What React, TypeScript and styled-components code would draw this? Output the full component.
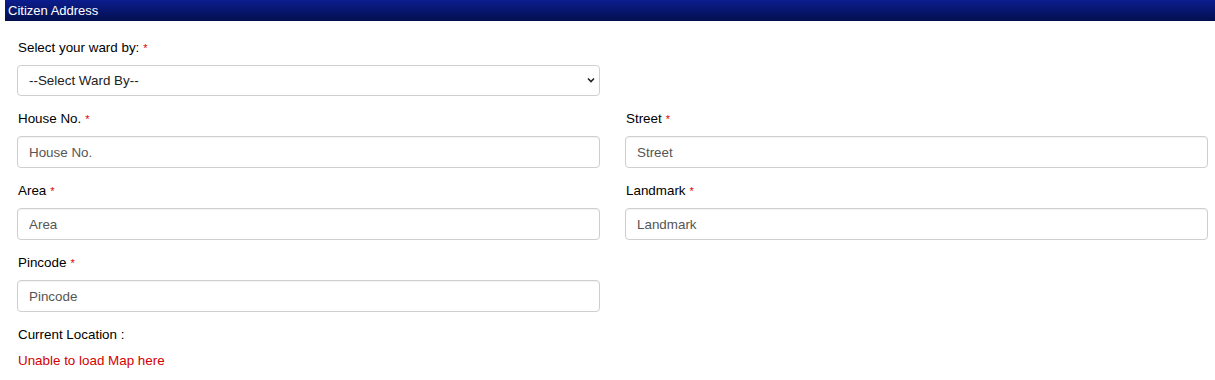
import React from "react";
import styled, { createGlobalStyle } from "styled-components";

const GlobalStyle = createGlobalStyle`
    body {
        margin: 0;
        background: #fff;
        font-family: "Liberation Sans", Arial, sans-serif;
        font-size: 13px;
        color: #000;
    }
`;

const Panel = styled.div`
    padding-left: 5px;
    width: 1210px;
`;

const Header = styled.div`
    height: 21px;
    line-height: 21px;
    padding-left: 3px;
    color: #fff;
    font-size: 13px;
    background: linear-gradient(#0c1d8f, #020f4e);
`;

const Form = styled.div`
    padding: 18px 7px 0 12px;
    display: grid;
    grid-template-columns: 583px 583px;
    column-gap: 25px;
    row-gap: 14px;
`;

const Group = styled.div`
    display: flex;
    flex-direction: column;
`;

const Label = styled.label`
    height: 18px;
    line-height: 18px;
    margin-bottom: 8px;
    padding-left: 1px;
    font-size: 13.4px;
`;

const Star = styled.span`
    color: #d00;
    font-size: 11px;
    margin-left: 4px;
    vertical-align: top;
`;

const Field = styled.input`
    box-sizing: border-box;
    height: 32px;
    width: 100%;
    padding: 0 11px;
    border: 1px solid #cfcfcf;
    border-radius: 4px;
    box-shadow: inset 0 1px 1px rgba(0, 0, 0, 0.05);
    font-family: "Liberation Sans", Arial, sans-serif;
    font-size: 13.4px;
    color: #333;
    &::placeholder {
        color: #555;
    }
`;

const SelectBox = styled.div`
    position: relative;
    box-sizing: border-box;
    height: 31px;
    border: 1px solid #cfcfcf;
    border-radius: 4px;
    display: flex;
    align-items: center;
    padding: 0 11px;
    font-size: 13.4px;
    color: #222;
    svg {
        position: absolute;
        right: 4px;
        top: 11px;
    }
`;

const Note = styled.div<{ $error?: boolean }>`
    height: 18px;
    line-height: 18px;
    padding-left: 1px;
    font-size: 13.4px;
    color: ${(p) => (p.$error ? "#d40000" : "#000")};
    margin-bottom: ${(p) => (p.$error ? 0 : 8)}px;
`;

const Chevron = () => (
    <svg width="8" height="6" viewBox="0 0 8 6">
        <path d="M1 1.5 L4 4.5 L7 1.5" fill="none" stroke="#222" strokeWidth="1.6" />
    </svg>
);

const Req = ({ text }: { text: string }) => (
    <Label>
        {text}
        <Star>*</Star>
    </Label>
);

export default function App() {
    return (
        <>
            <GlobalStyle />
            <Panel>
                <Header>Citizen Address</Header>
                <Form>
                    <Group>
                        <Req text="Select your ward by:" />
                        <SelectBox>
                            --Select Ward By--
                            <Chevron />
                        </SelectBox>
                    </Group>
                    <div />
                    <Group>
                        <Req text="House No." />
                        <Field placeholder="House No." />
                    </Group>
                    <Group>
                        <Req text="Street" />
                        <Field placeholder="Street" />
                    </Group>
                    <Group>
                        <Req text="Area" />
                        <Field placeholder="Area" />
                    </Group>
                    <Group>
                        <Req text="Landmark" />
                        <Field placeholder="Landmark" />
                    </Group>
                    <Group>
                        <Req text="Pincode" />
                        <Field placeholder="Pincode" />
                    </Group>
                    <div />
                    <Group>
                        <Note>Current Location :</Note>
                        <Note $error>Unable to load Map here</Note>
                    </Group>
                </Form>
            </Panel>
        </>
    );
}
